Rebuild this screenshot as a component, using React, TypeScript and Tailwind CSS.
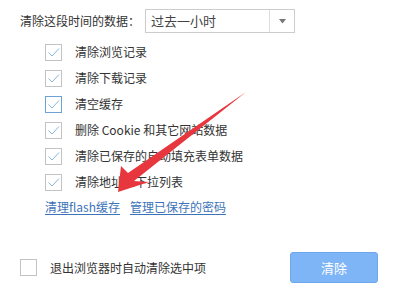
const font = { fontFamily: '"Microsoft YaHei", "Noto Sans CJK SC", "Noto Sans", sans-serif' };

const items = [
  { label: '清除浏览记录', focus: false },
  { label: '清除下载记录', focus: false },
  { label: '清空缓存', focus: true },
  { label: '删除 Cookie 和其它网站数据', focus: false },
  { label: '清除已保存的自动填充表单数据', focus: false },
  { label: '清除地址栏下拉列表', focus: false },
];

function Box({ checked, focus }: { checked: boolean; focus?: boolean }) {
  return (
    <span
      className={`flex h-[17px] w-[17px] shrink-0 items-center justify-center border bg-white ${
        focus ? 'border-[#6da2d6]' : 'border-[#c3c3c3]'
      }`}
    >
      {checked && (
        <svg width="13" height="11" viewBox="0 0 13 11" fill="none">
          <path d="M1.5 5.5 L5 9 L12 1.5" stroke="#86b5dc" strokeWidth="1" />
        </svg>
      )}
    </span>
  );
}

export default function App() {
  return (
    <div className="relative h-[294px] w-[403px] overflow-hidden bg-white text-[12px] text-[#333]" style={font}>
      <div className="flex items-center pl-[20px] pt-[9px]">
        <span className="w-[125px]">清除这段时间的数据：</span>
        <div className="flex h-[24px] w-[150px] items-center border border-[#cccccc] bg-white">
          <span className="flex-1 pl-[5px] text-[13px] text-[#444]">过去一小时</span>
          <span className="flex h-full w-[25px] items-center justify-center border-l border-[#dddddd]">
            <svg width="7" height="5" viewBox="0 0 7 5">
              <path d="M0 0 H7 L3.5 4.5 Z" fill="#777" />
            </svg>
          </span>
        </div>
      </div>

      <div className="mt-[6px] flex flex-col pl-[45px]">
        {items.map((it) => (
          <label key={it.label} className="flex h-[26px] items-center gap-[13px]">
            <Box checked focus={it.focus} />
            <span className="text-[12px] leading-none">{it.label}</span>
          </label>
        ))}
        <div className="flex h-[24px] items-center gap-[10px] text-[12px] text-[#3d73b9]">
          <a className="underline underline-offset-2">清理flash缓存</a>
          <a className="underline underline-offset-2">管理已保存的密码</a>
        </div>
      </div>

      <div className="mt-[33px] flex items-center pl-[20px] pr-[25px]">
        <Box checked={false} />
        <span className="ml-[13px] text-[12px]">退出浏览器时自动清除选中项</span>
        <button
          type="button"
          className="ml-auto h-[31px] w-[88px] rounded-[3px] border border-[#6ea6ec] bg-[#7eb5f7] text-[13px] text-white"
        >
          清除
        </button>
      </div>

      <svg className="pointer-events-none absolute left-0 top-0" width="403" height="294" viewBox="0 0 403 294">
        <polygon points="118,192 121,166 128,173 246,92 134,181 149,182" fill="#e8363e" />
      </svg>
    </div>
  );
}
